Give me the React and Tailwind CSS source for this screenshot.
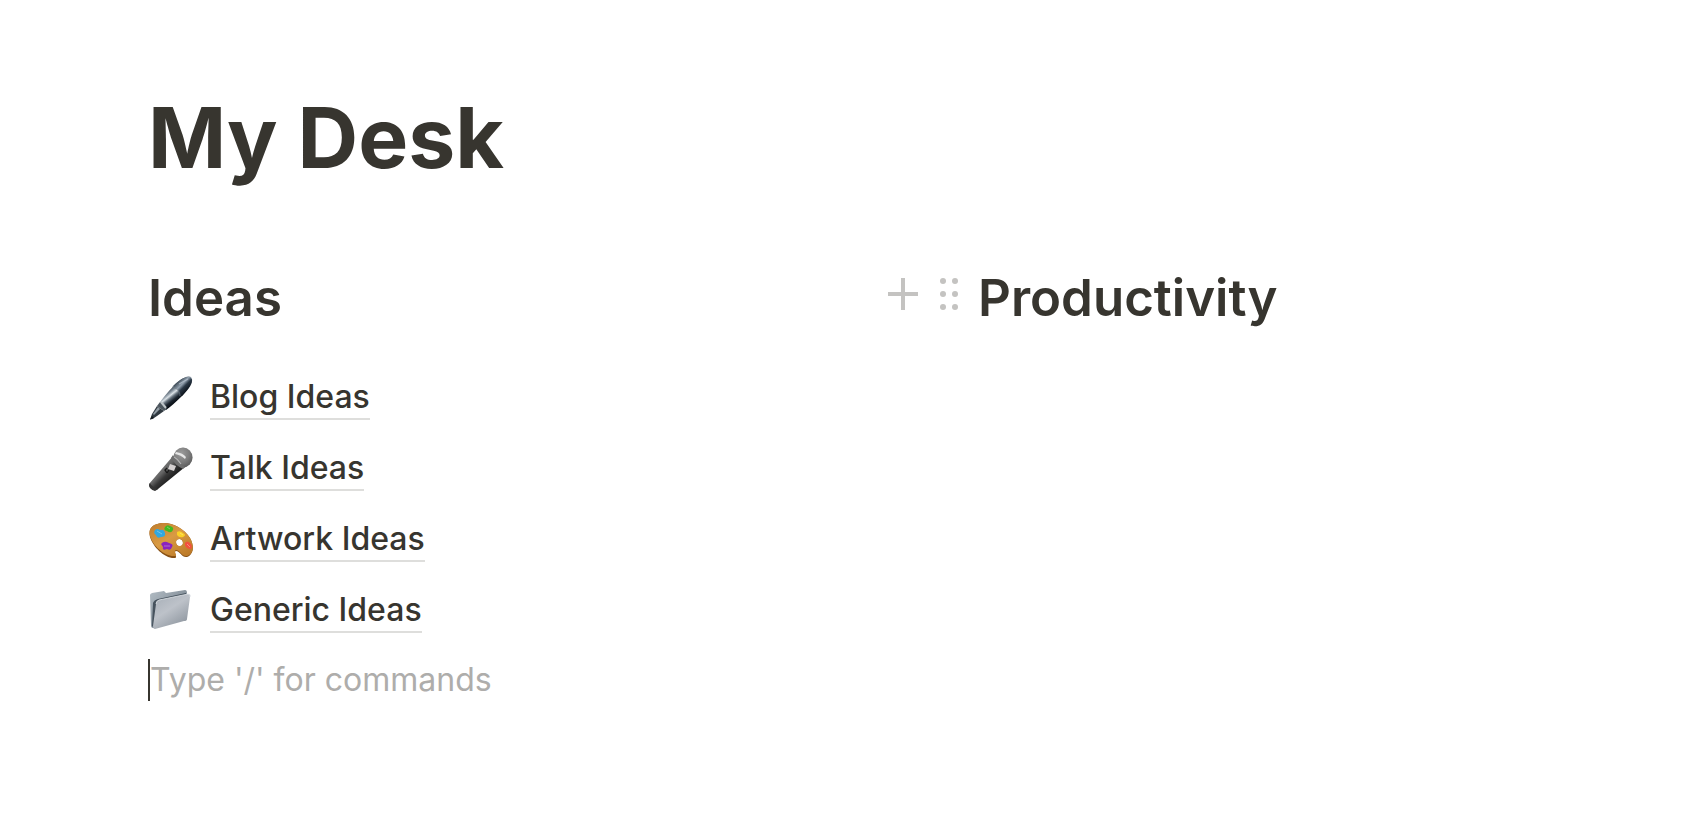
function PenIcon() {
  return (
    <svg viewBox="0 0 44 44" className="size-11 shrink-0" aria-hidden="true">
      <defs>
        <linearGradient id="pen-body" gradientUnits="userSpaceOnUse" x1="19" y1="15" x2="27" y2="25">
          <stop offset="0" stopColor="#4b5763" />
          <stop offset=".2" stopColor="#8b97a2" />
          <stop offset=".38" stopColor="#dbe2e7" />
          <stop offset=".56" stopColor="#66727d" />
          <stop offset=".8" stopColor="#1b242e" />
          <stop offset="1" stopColor="#0c1219" />
        </linearGradient>
        <linearGradient id="pen-cap" gradientUnits="userSpaceOnUse" x1="30" y1="5" x2="39" y2="14">
          <stop offset="0" stopColor="#46535f" />
          <stop offset=".35" stopColor="#93a1af" />
          <stop offset=".6" stopColor="#2b3846" />
          <stop offset="1" stopColor="#0c131b" />
        </linearGradient>
      </defs>
      <path d="M1 43.5 3 38 8 30 15 35 8 40 3.5 43Z" fill="#303940" />
      <path d="M4 38 9 31 11 33 5 39Z" fill="#929da5" />
      <path d="M1 43.5 3 40 5 42Z" fill="#11171c" />
      <path d="M11 26C17 18 23 11 30 5C36 0 43 -1 43 3C44 8 38 15 33 20C27 26 21 31 17 34Z" fill="url(#pen-body)" />
      <path d="M24 10C30 4 37 0 41 1C46 4 41 11 33 20L30 18C30 14 28 12 24 10Z" fill="url(#pen-cap)" />
      <path d="M11 26 18 33 15 35 8 30Z" fill="#4b555d" />
      <path d="M12 26 17 32" stroke="#bcc3c7" strokeWidth="2" />
      <path d="M23 11C28 12 31 15 31 20" fill="none" stroke="#66727e" strokeWidth=".8" />
      <path d="M30 8 39 3" stroke="#b8c3cf" strokeWidth="1.1" opacity=".7" />
    </svg>
  );
}

function MicIcon() {
  return (
    <svg viewBox="0 0 44 44" className="size-11 shrink-0" aria-hidden="true">
      <defs>
        <linearGradient id="mic-body" gradientUnits="userSpaceOnUse" x1="10" y1="21" x2="21" y2="32">
          <stop offset="0" stopColor="#777" />
          <stop offset=".35" stopColor="#656565" />
          <stop offset=".65" stopColor="#373737" />
          <stop offset="1" stopColor="#222" />
        </linearGradient>
        <radialGradient id="mic-head" cx=".4" cy=".3" r=".7">
          <stop offset="0" stopColor="#b3b3b3" />
          <stop offset=".6" stopColor="#8b8b8b" />
          <stop offset="1" stopColor="#626262" />
        </radialGradient>
        <pattern id="mic-mesh" width="2" height="2" patternUnits="userSpaceOnUse">
          <path d="M0 0 2 2M2 0 0 2" stroke="#555" strokeWidth=".25" />
        </pattern>
      </defs>
      <path d="M24 9 0 37Q0 41 5 43Q7 44 9 42L36 20Z" fill="url(#mic-body)" />
      <path d="M1 36Q3 40 9 42L6 44Q0 42 0 38Z" fill="#353535" />
      <ellipse cx="34" cy="10.5" rx="9.5" ry="10" fill="url(#mic-head)" />
      <ellipse cx="34" cy="10.5" rx="9.5" ry="10" fill="url(#mic-mesh)" />
      <path d="M24 8Q27 15 36 20L34 22Q26 18 22 11Z" fill="#6e6e6e" />
      <path d="M27 5Q34 6 37 10L36 12Q32 8 26 7Z" fill="#e6e6e6" />
      <path d="M25 10Q29 12 32 17" fill="none" stroke="#b5b5b5" strokeWidth="1.2" />
      <path d="M21 17 27 19 25 24 19 22Z" fill="#d4d0d0" />
      <path d="M18 21 16 23 18 26M20 23 18 26" fill="none" stroke="#171717" strokeWidth="1.3" />
    </svg>
  );
}

function PaletteIcon() {
  return (
    <svg viewBox="0 0 44 44" className="size-11 shrink-0" aria-hidden="true">
      <defs>
        <linearGradient id="palette-wood" x1="0" y1="0" x2=".8" y2="1">
          <stop offset="0" stopColor="#bd7b2c" />
          <stop offset=".5" stopColor="#d99b43" />
          <stop offset="1" stopColor="#bd7b29" />
        </linearGradient>
      </defs>
      <path fillRule="evenodd" d="M13 5C22 4 35 10 41 20C46 29 44 37 38 39C33 40 31 33 27 33C24 34 29 39 26 40C16 41 4 29 1 19C-1 11 3 6 13 5ZM27 24C27 30 34 29 34 25C34 20 27 20 27 24Z" fill="#885115" />
      <path fillRule="evenodd" d="M13 5C22 4 35 10 41 20C46 29 44 36 38 38C33 39 31 32 27 32C24 33 29 38 26 38C16 39 4 28 1 18C-1 11 3 6 13 5ZM27 24C27 29 34 29 34 25C34 20 27 20 27 24Z" fill="url(#palette-wood)" />
      <path d="M6 12Q8 10 11 12Q15 11 16 15Q17 19 12 19Q8 21 7 17Q4 15 6 12Z" fill="#31a8df" />
      <path d="M16 9Q18 6 21 8Q25 9 24 12Q22 16 18 13Q14 12 16 9Z" fill="#42ba20" />
      <path d="M28 14Q31 12 34 15Q38 17 34 19Q30 20 28 17Z" fill="#fbd126" />
      <path d="M12 26Q15 22 20 25Q25 26 23 29Q22 33 18 31Q13 33 14 29Z" fill="#8b24be" />
      <path d="M36 25Q38 22 41 25Q44 28 42 31Q37 31 36 27Z" fill="#f2513f" />
      <path d="M8 13 13 16M18 9 21 11M31 15 34 17M15 28 21 28M38 26 41 29" stroke="#fff" strokeWidth=".9" opacity=".35" />
    </svg>
  );
}

function FolderIcon() {
  return (
    <svg viewBox="0 0 44 44" className="size-11 shrink-0" aria-hidden="true">
      <defs>
        <linearGradient id="folder-front" x1="0" y1="0" x2=".7" y2="1">
          <stop offset="0" stopColor="#a5adb6" />
          <stop offset=".5" stopColor="#bdc2c9" />
          <stop offset="1" stopColor="#8e969f" />
        </linearGradient>
        <linearGradient id="folder-back" x1="0" y1="0" x2="1" y2="1">
          <stop offset="0" stopColor="#b3bdc5" />
          <stop offset="1" stopColor="#626e79" />
        </linearGradient>
      </defs>
      <path d="M1 6Q1 5 3 4L15 2 17 4 36 1Q38 1 38 4L36 30 4 39Q2 39 2 36Z" fill="url(#folder-back)" />
      <path d="M4 14Q5 11 9 10L37 4 37 7 9 15 5 39 3 37Z" fill="#46525d" />
      <path d="M7 15Q7 12 10 11L39 5Q42 5 41 8L38 30Q38 32 35 32L6 40Q4 40 4 37Z" fill="url(#folder-front)" />
      <path d="M7 15Q7 12 10 11L39 5Q42 5 41 8" fill="none" stroke="#e0e4e8" strokeWidth=".8" />
    </svg>
  );
}

const pages = [
  { title: "Blog Ideas", Icon: PenIcon },
  { title: "Talk Ideas", Icon: MicIcon },
  { title: "Artwork Ideas", Icon: PaletteIcon },
  { title: "Generic Ideas", Icon: FolderIcon },
];

export default function App() {
  return (
    <main className="min-h-screen bg-white px-[148px] pt-[86px] pb-12 font-['Inter',sans-serif] text-[#37352f]">
      <h1 className="text-[84px] leading-[104px] font-bold">My Desk</h1>
      <div className="mt-[74px] grid grid-cols-[740fr_664fr] max-lg:grid-cols-1">
        <section aria-labelledby="ideas">
          <h2 id="ideas" className="text-[51px] leading-[68px] font-semibold">Ideas</h2>
          <ul className="mt-11 flex flex-col gap-[27px]">
            {pages.map(({ title, Icon }) => (
              <li key={title}>
                <a href="#" className="flex items-center gap-[17px] pl-px">
                  <Icon />
                  <span className="border-b-2 border-[#dededc] text-[32px] leading-[42px] font-medium">{title}</span>
                </a>
              </li>
            ))}
          </ul>
          <input
            type="text"
            aria-label="New block"
            placeholder="Type '/' for commands"
            className="mt-[26px] block h-[42px] w-full border-l-2 border-[#37352f] text-[32px] leading-[42px] outline-none placeholder:text-[#aeadab]"
          />
        </section>
        <section aria-labelledby="productivity" className="flex items-start">
          <div className="flex h-[60px] items-center gap-[22px] pr-5 text-[#c4c3c1]">
            <button type="button" aria-label="Add block">
              <svg viewBox="0 0 30 32" className="h-8 w-[30px]" fill="none" stroke="currentColor" strokeWidth="4" aria-hidden="true">
                <path d="M15 0V32M0 16H30" />
              </svg>
            </button>
            <button type="button" aria-label="Drag block">
              <svg viewBox="0 0 18 32" className="h-8 w-[18px]" fill="currentColor" aria-hidden="true">
                <circle cx="3" cy="3" r="3" />
                <circle cx="15" cy="3" r="3" />
                <circle cx="3" cy="16" r="3" />
                <circle cx="15" cy="16" r="3" />
                <circle cx="3" cy="29" r="3" />
                <circle cx="15" cy="29" r="3" />
              </svg>
            </button>
          </div>
          <h2 id="productivity" className="text-[51px] leading-[68px] font-semibold">Productivity</h2>
        </section>
      </div>
    </main>
  );
}
